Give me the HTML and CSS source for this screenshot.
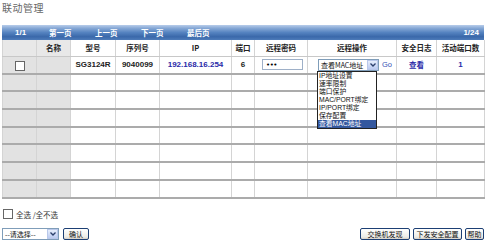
FILE: index.html
```html
<!DOCTYPE html>
<html>
<head>
<meta charset="utf-8">
<link rel="stylesheet" href="styles.css">
</head>
<body>
<div class="title">联动管理</div>
<div class="wrap">
  <div class="pager">
    <span class="pg pg-first">1/1</span>
    <span class="pg">第一页</span>
    <span class="pg">上一页</span>
    <span class="pg">下一页</span>
    <span class="pg">最后页</span>
    <span class="pg-total">1/24</span>
  </div>
  <table class="grid">
    <colgroup>
      <col style="width:34px"><col style="width:34px"><col style="width:45px"><col style="width:44px"><col style="width:72px"><col style="width:23px"><col style="width:53px"><col style="width:89px"><col style="width:40px"><col style="width:48px">
    </colgroup>
    <thead>
      <tr>
        <th class="g"></th><th class="g">名称</th><th>型号</th><th>序列号</th><th>IP</th><th>端口</th><th>远程密码</th><th>远程操作</th><th>安全日志</th><th>活动端口数</th>
      </tr>
    </thead>
    <tbody>
      <tr>
        <td class="g"><input type="checkbox" class="cb"></td><td class="g"></td>
        <td class="b">SG3124R</td><td class="b">9040099</td><td class="b blue">192.168.16.254</td><td class="b">6</td>
        <td><input type="password" class="pw" value="abc"></td>
        <td class="op">
          <div class="opwrap">
            <div class="sel"><span class="sel-text">查看MAC地址</span><span class="arrow"><svg width="6" height="4" viewBox="0 0 6 4"><path d="M0.5 0.5 L3 3 L5.5 0.5" fill="none" stroke="#2b3f6b" stroke-width="1.3"/></svg></span></div>
            <span class="go">Go</span>
          </div>
        </td>
        <td class="b blue cjk">查看</td><td class="b blue">1</td>
      </tr>
      <tr><td class="g"></td><td class="g"></td><td></td><td></td><td></td><td></td><td></td><td></td><td></td><td></td></tr>
      <tr><td class="g"></td><td class="g"></td><td></td><td></td><td></td><td></td><td></td><td></td><td></td><td></td></tr>
      <tr><td class="g"></td><td class="g"></td><td></td><td></td><td></td><td></td><td></td><td></td><td></td><td></td></tr>
      <tr><td class="g"></td><td class="g"></td><td></td><td></td><td></td><td></td><td></td><td></td><td></td><td></td></tr>
      <tr><td class="g"></td><td class="g"></td><td></td><td></td><td></td><td></td><td></td><td></td><td></td><td></td></tr>
      <tr><td class="g"></td><td class="g"></td><td></td><td></td><td></td><td></td><td></td><td></td><td></td><td></td></tr>
      <tr><td class="g"></td><td class="g"></td><td></td><td></td><td></td><td></td><td></td><td></td><td></td><td></td></tr>
    </tbody>
  </table>
  <ul class="droplist">
    <li>IP地址设置</li>
    <li>速率限制</li>
    <li>端口保护</li>
    <li>MAC/PORT绑定</li>
    <li>IP/PORT绑定</li>
    <li>保存配置</li>
    <li class="hl">查看MAC地址</li>
  </ul>
  <div class="selall"><input type="checkbox" class="cb"><span>全选 /全不选</span></div>
  <div class="actions">
    <div class="left">
      <div class="sel sel2"><span class="sel-text">--请选择--</span><span class="arrow"><svg width="6" height="4" viewBox="0 0 6 4"><path d="M0.5 0.5 L3 3 L5.5 0.5" fill="none" stroke="#2b3f6b" stroke-width="1.3"/></svg></span></div>
      <button class="btn btn-ok">确认</button>
    </div>
    <div class="right">
      <button class="btn btn-find">交换机发现</button>
      <button class="btn btn-cfg">下发安全配置</button>
      <button class="btn btn-help">帮助</button>
    </div>
  </div>
</div>
</body>
</html>
```
FILE: styles.css
```css
* { box-sizing: border-box; }
body {
  margin: 0;
  width: 487px;
  height: 243px;
  overflow: hidden;
  background: #fff;
  font-family: "Noto Sans CJK SC", "Liberation Sans", sans-serif;
  color: #222;
}
.title {
  height: 25px;
  padding: 1px 0 0 2px;
  font-size: 10px;
  line-height: 13px;
  color: #666;
  letter-spacing: 0.5px;
}
.wrap {
  position: relative;
  margin-left: 2px;
  width: 482px;
}
.pager {
  height: 15px;
  display: flex;
  align-items: center;
  padding-left: 13px;
  padding-right: 5px;
  background: linear-gradient(#b8cdea 0%, #85a7d5 22%, #5583c0 50%, #3a68aa 78%, #4e7cba 100%);
  color: #fff;
  font-weight: bold;
  font-size: 7.5px;
}
.pg { width: 46px; }
.pg-first { width: 34px; font-family: "Liberation Sans", sans-serif; font-size: 8px; }
.pg-total { margin-left: auto; font-family: "Liberation Sans", sans-serif; font-size: 8px; }
.grid {
  width: 482px;
  border-collapse: collapse;
  table-layout: fixed;
  border-left: 1px solid #c8c8c8;
  border-right: 1px solid #c8c8c8;
}
.grid th, .grid td {
  padding: 0;
  text-align: center;
  vertical-align: middle;
  border-left: 1px solid #d4d4d4;
  border-right: 1px solid #d4d4d4;
  border-bottom: 2px solid #ababab;
  overflow: visible;
  white-space: nowrap;
}
.grid th {
  height: 16px;
  font-size: 7.5px;
  font-weight: bold;
  color: #222;
  background: #fff;
  border-bottom: 1px solid #c8c8c8;
}
.grid td { height: 17.7px; font-size: 8px; }
.grid .g { background: #e2e2e2; }
.grid th.g { background: #e8e8e8; }
.b { font-family: "Liberation Sans", sans-serif; font-weight: bold; }
.blue { color: #2a2aa8; }
.grid td.cjk { font-family: "Noto Sans CJK SC", sans-serif; font-size: 7.5px; }
.cb {
  appearance: none;
  -webkit-appearance: none;
  margin: 0;
  width: 10px;
  height: 10px;
  border: 1px solid #666;
  background: #fff;
  vertical-align: middle;
}
.pw {
  display: block;
  margin: 0 0 0 7px;
  width: 41px;
  height: 11px;
  border: 1px solid #9eb0c8;
  padding: 0 0 0 3px;
  font-family: "DejaVu Sans", sans-serif;
  font-size: 7px;
  line-height: 9px;
  letter-spacing: -0.5px;
  color: #000;
  outline: none;
}
.opwrap {
  display: flex;
  align-items: center;
  padding-left: 10px;
}
.sel {
  display: flex;
  align-items: center;
  width: 61px;
  height: 12px;
  border: 1px solid #7f9db9;
  background: #fff;
}
.sel-text {
  flex: 1;
  font-size: 7px;
  line-height: 10px;
  padding-left: 2px;
  text-align: left;
  color: #111;
  white-space: nowrap;
}
.arrow {
  width: 11px;
  height: 10px;
  background: linear-gradient(#e6eefc, #bccbf0);
  border: 1px solid #b9c8ea;
  display: flex;
  align-items: center;
  justify-content: center;
}
.go {
  margin-left: 3px;
  font-family: "Liberation Sans", sans-serif;
  font-size: 7.5px;
  color: #3552b5;
}
.droplist {
  position: absolute;
  left: 315px;
  top: 46px;
  width: 60px;
  margin: 0;
  padding: 0;
  list-style: none;
  border: 1px solid #222;
  background: #fff;
}
.droplist li {
  height: 8px;
  font-family: "Liberation Sans", "Noto Sans CJK SC", sans-serif;
  font-size: 6.8px;
  line-height: 8px;
  padding-left: 1px;
  color: #111;
  white-space: nowrap;
  overflow: hidden;
}
.droplist li.hl { background: #34589f; color: #fff; }
.selall {
  display: flex;
  align-items: center;
  gap: 3px;
  margin-top: 10px;
  margin-left: 1px;
  height: 11px;
  font-size: 7.5px;
  color: #333;
}
.actions {
  display: flex;
  justify-content: space-between;
  align-items: center;
  margin-top: 8px;
}
.left, .right { display: flex; align-items: center; gap: 3px; }
.sel2 { width: 57px; }
.left { gap: 4px; }
.btn {
  height: 12px;
  padding: 0;
  font-family: "Noto Sans CJK SC", sans-serif;
  font-size: 7px;
  line-height: 10px;
  color: #111;
  background: linear-gradient(#ffffff, #ecebe6 80%, #d6d0c5);
  border: 1px solid #1c3f74;
  border-radius: 2px;
  white-space: nowrap;
  text-align: center;
}
.btn-ok { width: 26px; }
.btn-find { width: 50px; }
.btn-cfg { width: 49px; }
.btn-help { width: 19px; }
```
